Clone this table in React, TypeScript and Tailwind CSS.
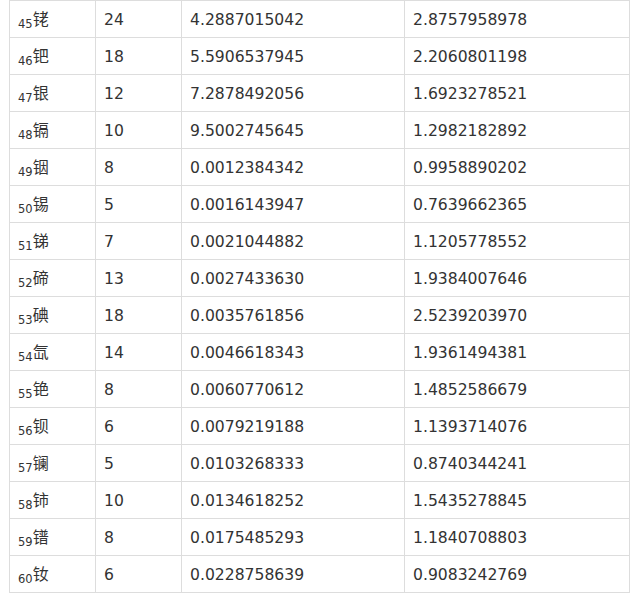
import React from 'react';

// atomic number, element, column 2, column 3, column 4
const rows: [string, string, string, string, string][] = [
  ['45', '铑', '24', '4.2887015042', '2.8757958978'],
  ['46', '钯', '18', '5.5906537945', '2.2060801198'],
  ['47', '银', '12', '7.2878492056', '1.6923278521'],
  ['48', '镉', '10', '9.5002745645', '1.2982182892'],
  ['49', '铟', '8', '0.0012384342', '0.9958890202'],
  ['50', '锡', '5', '0.0016143947', '0.7639662365'],
  ['51', '锑', '7', '0.0021044882', '1.1205778552'],
  ['52', '碲', '13', '0.0027433630', '1.9384007646'],
  ['53', '碘', '18', '0.0035761856', '2.5239203970'],
  ['54', '氙', '14', '0.0046618343', '1.9361494381'],
  ['55', '铯', '8', '0.0060770612', '1.4852586679'],
  ['56', '钡', '6', '0.0079219188', '1.1393714076'],
  ['57', '镧', '5', '0.0103268333', '0.8740344241'],
  ['58', '铈', '10', '0.0134618252', '1.5435278845'],
  ['59', '镨', '8', '0.0175485293', '1.1840708803'],
  ['60', '钕', '6', '0.0228758639', '0.9083242769'],
];

const App: React.FC = () => {
  return (
    <div className="w-[633px] h-[596px] overflow-hidden bg-white">
      <table
        className="ml-[9px] border-collapse text-[15.6px] text-[#333] table-fixed w-[620px]"
        style={{ fontFamily: '"DejaVu Sans", "Noto Sans CJK SC", sans-serif' }}
      >
        <colgroup>
          <col className="w-[86px]" />
          <col className="w-[86px]" />
          <col className="w-[223px]" />
          <col className="w-[225px]" />
        </colgroup>
        <tbody>
          {rows.map(([num, el, a, b, c]) => (
            <tr key={num} className="h-[37px]">
              <td className="border border-[#ddd] pl-[8px] pr-[4px] pt-[3px] pb-0 align-middle whitespace-nowrap">
                <span className="text-[11.5px] relative top-[3px]">{num}</span>
                <span className="text-[16px]">{el}</span>
              </td>
              <td className="border border-[#ddd] px-[8px] pt-[3px] pb-0 align-middle">{a}</td>
              <td className="border border-[#ddd] px-[8px] pt-[3px] pb-0 align-middle">{b}</td>
              <td className="border border-[#ddd] px-[8px] pt-[3px] pb-0 align-middle">{c}</td>
            </tr>
          ))}
        </tbody>
      </table>
    </div>
  );
};

export default App;
